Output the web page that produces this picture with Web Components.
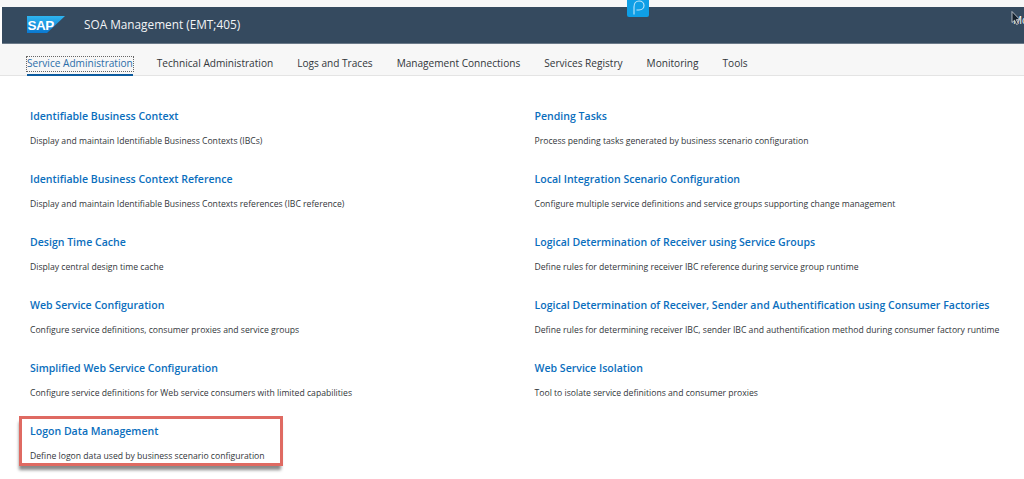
<!DOCTYPE html>
<html>
<head>
<meta charset="utf-8">
<style>
  html, body { margin: 0; height: 100%; overflow: hidden; background: #fff; }
  body { font-family: "Open Sans", "Liberation Sans", sans-serif; }
</style>
</head>
<body>
<soa-page>
  <soa-header title-text="SOA Management (EMT;405)"></soa-header>
  <soa-tabs>
    <soa-tab active>Service Administration</soa-tab>
    <soa-tab>Technical Administration</soa-tab>
    <soa-tab>Logs and Traces</soa-tab>
    <soa-tab>Management Connections</soa-tab>
    <soa-tab>Services Registry</soa-tab>
    <soa-tab>Monitoring</soa-tab>
    <soa-tab>Tools</soa-tab>
  </soa-tabs>
  <soa-links>
    <soa-link heading="Identifiable Business Context">Display and maintain Identifiable Business Contexts (IBCs)</soa-link>
    <soa-link heading="Pending Tasks">Process pending tasks generated by business scenario configuration</soa-link>
    <soa-link heading="Identifiable Business Context Reference">Display and maintain Identifiable Business Contexts references (IBC reference)</soa-link>
    <soa-link heading="Local Integration Scenario Configuration">Configure multiple service definitions and service groups supporting change management</soa-link>
    <soa-link heading="Design Time Cache">Display central design time cache</soa-link>
    <soa-link heading="Logical Determination of Receiver using Service Groups">Define rules for determining receiver IBC reference during service group runtime</soa-link>
    <soa-link heading="Web Service Configuration">Configure service definitions, consumer proxies and service groups</soa-link>
    <soa-link heading="Logical Determination of Receiver, Sender and Authentification using Consumer Factories">Define rules for determining receiver IBC, sender IBC and authentification method during consumer factory runtime</soa-link>
    <soa-link heading="Simplified Web Service Configuration">Configure service definitions for Web service consumers with limited capabilities</soa-link>
    <soa-link heading="Web Service Isolation">Tool to isolate service definitions and consumer proxies</soa-link>
    <soa-link heading="Logon Data Management" marked>Define logon data used by business scenario configuration</soa-link>
  </soa-links>
</soa-page>
<script>
class SoaPage extends HTMLElement {
  constructor() {
    super();
    this.attachShadow({mode: 'open'});
    this.shadowRoot.innerHTML = `
    <style>
      :host {
        display: block;
        position: relative;
        width: 1024px;
        height: 479px;
        overflow: hidden;
        padding-top: 7px;
        box-sizing: border-box;
        background: #fff;
      }
      .top {
        position: absolute;
        left: 0; right: 0; top: 0;
        height: 7px;
        background: #f7f7f7;
      }
      .badge {
        position: absolute;
        left: 627px;
        top: 0;
        width: 22px;
        height: 17px;
        background: #0f9fe6;
        border-radius: 0 0 2px 2px;
      }
      .badge svg { display: block; }
      .cursor { position: absolute; left: 1011px; top: 11px; }
      .more {
        position: absolute;
        left: 1013px;
        top: 13px;
        color: #fff;
        font-size: 10px;
        line-height: 14px;
      }
    </style>
    <div class="top"></div>
    <slot></slot>
    <div class="badge">
      <svg width="22" height="17" viewBox="0 0 22 17">
        <path d="M7 14.5V7C7 3.5 9 1 12 1S17 3 17 5.5 15 10 12 10H9.5" fill="none" stroke="#bfe6fa" stroke-width="1.1"/>
      </svg>
    </div>
    <div class="more">Mo</div>
    <svg class="cursor" width="10" height="15" viewBox="0 0 10 15">
      <path d="M1 0.5V11.5L3.6 9.2L5.6 13.5L7.3 12.7L5.4 8.6H8.8Z" fill="#14202c" stroke="#e8edf2" stroke-width="0.7"/>
    </svg>`;
  }
}

class SoaHeader extends HTMLElement {
  constructor() {
    super();
    this.attachShadow({mode: 'open'});
    this.shadowRoot.innerHTML = `
    <style>
      :host {
        display: flex;
        align-items: center;
        height: 37px;
        margin-left: 2px;
        padding: 0 0 1px 25px;
        background: #354a5f;
        border-bottom: 1px solid #6b7a89;
        box-sizing: border-box;
        color: #fff;
        font-size: 11.8px;
      }
      svg { display: block; flex: none; }
      .name { margin: 0 0 2px 19px; color: #f2f4f6; }
    </style>
    <svg width="38" height="17" viewBox="0 0 38 17">
      <defs>
        <linearGradient id="sap" x1="0" y1="0" x2="0" y2="1">
          <stop offset="0" stop-color="#2fb5f0"/>
          <stop offset="1" stop-color="#0a78d0"/>
        </linearGradient>
      </defs>
      <path d="M0 0H38L20 17H0Z" fill="url(#sap)"/>
      <text x="0.5" y="13.5" font-family="Liberation Sans" font-weight="700" font-size="13.5" letter-spacing="-0.5" fill="#fff">SAP</text>
    </svg>
    <span class="name"></span>`;
  }

  connectedCallback() {
    this.shadowRoot.querySelector('.name').textContent = this.getAttribute('title-text');
  }
}

class SoaTabs extends HTMLElement {
  constructor() {
    super();
    this.attachShadow({mode: 'open'});
    this.shadowRoot.innerHTML = `
    <style>
      :host {
        display: flex;
        gap: 24px;
        height: 32px;
        padding-left: 27px;
        box-sizing: border-box;
        background: #f7f7f7;
        border-bottom: 1px solid #e4e4e4;
      }
    </style>
    <slot></slot>`;
  }
}

class SoaTab extends HTMLElement {
  constructor() {
    super();
    this.attachShadow({mode: 'open'});
    this.shadowRoot.innerHTML = `
    <style>
      :host {
        display: block;
        height: 32px;
        box-sizing: border-box;
        padding-top: 13px;
        color: #32363a;
        font-size: 10.1px;
        line-height: 13px;
        white-space: nowrap;
      }
      :host([active]) {
        color: #2b6da8;
        border-bottom: 2px solid #0a5a9e;
      }
      span { display: block; height: 14px; }
      :host([active]) span { outline: 1px dotted #666; }
    </style>
    <span><slot></slot></span>`;
  }
}

class SoaLinks extends HTMLElement {
  constructor() {
    super();
    this.attachShadow({mode: 'open'});
    this.shadowRoot.innerHTML = `
    <style>
      :host {
        display: grid;
        grid-template-columns: 504.5px 1fr;
        grid-auto-rows: 63px;
        padding: 32px 0 0 30px;
      }
    </style>
    <slot></slot>`;
  }
}

class SoaLink extends HTMLElement {
  constructor() {
    super();
    this.attachShadow({mode: 'open'});
    this.shadowRoot.innerHTML = `
    <style>
      :host { display: block; }
      :host([marked]) {
        width: 250px;
        height: 40px;
        margin: -4px 0 0 -8px;
        padding: 4px 0 0 8px;
        box-shadow: 0 0 0 3px #df6a62, -1px 5px 3px 2px #8a8a8a;
        background: #fff;
      }
      a {
        display: block;
        color: #0a6ebd;
        font-size: 10.55px;
        font-weight: 600;
        line-height: 16px;
        white-space: nowrap;
        text-decoration: none;
      }
      p {
        margin: 10px 0 0;
        color: #32363a;
        font-size: 8.65px;
        line-height: 14px;
        white-space: nowrap;
      }
    </style>
    <a href="#"></a>
    <p><slot></slot></p>`;
  }

  connectedCallback() {
    this.shadowRoot.querySelector('a').textContent = this.getAttribute('heading');
  }
}

customElements.define('soa-page', SoaPage);
customElements.define('soa-header', SoaHeader);
customElements.define('soa-tabs', SoaTabs);
customElements.define('soa-tab', SoaTab);
customElements.define('soa-links', SoaLinks);
customElements.define('soa-link', SoaLink);
</script>
</body>
</html>
